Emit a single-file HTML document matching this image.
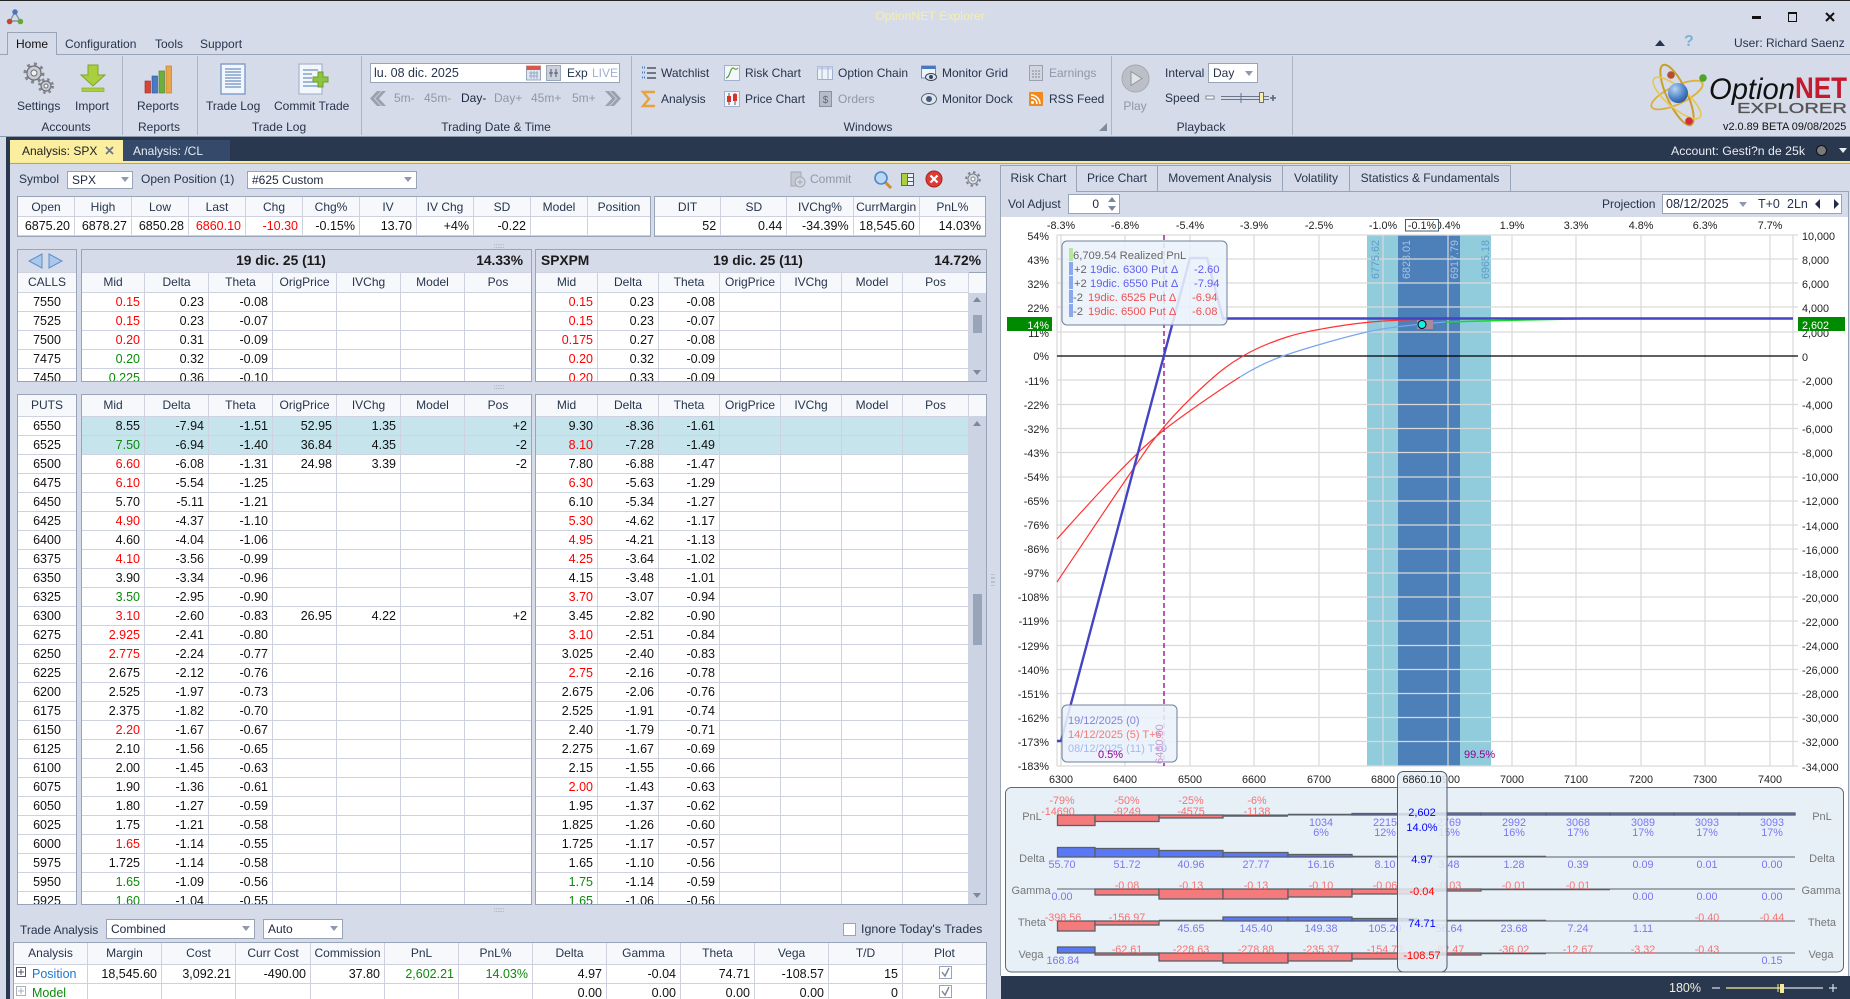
<!DOCTYPE html>
<html><head><meta charset="utf-8"><title>OptionNET Explorer</title>
<style>
html,body{margin:0;padding:0;width:1850px;height:999px;overflow:hidden;background:#d5dbe8}
body{position:relative;font:12px "Liberation Sans",Arial,sans-serif;color:#26344c}
.t{position:absolute;white-space:nowrap;line-height:14px}
.b{position:absolute;box-sizing:border-box}
.g{color:#8f98a8}
.c{text-align:center;transform:translateX(-50%)}
.sel{position:absolute;box-sizing:border-box;background:#fff;border:1px solid #98a5b9;line-height:16px;padding-left:4px;color:#1a2740;white-space:nowrap}
.ar{position:absolute;width:0;height:0;border-left:4px solid transparent;border-right:4px solid transparent;border-top:5px solid #8d99ac}
svg{position:absolute;overflow:visible}
table{border-collapse:collapse;table-layout:fixed;font-size:12.5px;color:#111}
td,th{box-sizing:border-box;border:1px solid #cdd1e0;padding:0 4px 0 0;text-align:right;overflow:hidden;white-space:nowrap;height:19px;line-height:14px;font-weight:normal}
th{background:#f6f8fc;text-align:center;padding:0 0 2px;color:#26344c;height:20px;font-size:12px}
.q th{padding:0}
td.k{text-align:center;padding:0}
.p{position:absolute;box-sizing:border-box;border:1px solid #98a5b9;overflow:hidden;background:#fff}
.p table{position:absolute;left:-1px}
.band{position:absolute;left:0;right:0;top:0;height:23px;background:#d5dbe8;border-bottom:1px solid #98a5b9;box-sizing:border-box}
.bd{font-weight:bold;color:#1a1a1a;font-size:13.8px}
.r{color:#f00}.n{color:#0a8a0a}
.h td{background:#c6e4ec}
.tab{position:absolute;box-sizing:border-box;top:165px;height:26px;border:1px solid #98a5b9;border-bottom:0;line-height:24px;text-align:center;background:#d5dbe8;color:#26344c}
.cx{font:10.8px "Liberation Sans",Arial,sans-serif}
</style></head><body>

<div class="b" style="left:0;top:0;width:1850px;height:1px;background:#222"></div>

<!-- app icon -->
<svg style="left:6px;top:8px" width="18" height="18" viewBox="0 0 18 18"><path d="M9 4L4 13H14Z" fill="none" stroke="#8a93a5" stroke-width="1.4"/><circle cx="9" cy="4" r="2.7" fill="#4a74b8"/><circle cx="3.6" cy="13.5" r="2.8" fill="#c8452c"/><circle cx="14.4" cy="13.5" r="2.8" fill="#64a83a"/></svg>
<div class="t c" style="left:930px;top:9px;color:#f6efae;font-size:12.3px">OptionNET Explorer</div>

<!-- window controls -->
<div class="b" style="left:1752px;top:16px;width:9px;height:3px;background:#111"></div>
<div class="b" style="left:1788px;top:12px;width:9px;height:10px;border:1.5px solid #111;border-top-width:2.5px"></div>
<svg style="left:1825px;top:12px" width="10" height="10"><path d="M1 1L9 9M9 1L1 9" stroke="#111" stroke-width="2"/></svg>

<!-- ribbon tabs -->
<div class="b" style="left:0;top:54px;width:1850px;height:1px;background:#98a5b9"></div>
<div class="b" style="left:7px;top:32px;width:50px;height:23px;background:#d5dbe8;border:1px solid #98a5b9;border-bottom:0"></div>
<div class="t" style="left:16px;top:37px;color:#111">Home</div>
<div class="t" style="left:65px;top:37px">Configuration</div>
<div class="t" style="left:155px;top:37px">Tools</div>
<div class="t" style="left:200px;top:37px">Support</div>
<svg style="left:1655px;top:40px" width="10" height="6"><path d="M0 6L5 0L10 6Z" fill="#26344c"/></svg>
<div class="t" style="left:1684px;top:35px;color:#7fb2d4;font-size:16px;font-weight:bold">?</div>
<div class="t" style="left:1734px;top:36px">User: Richard Saenz</div>

<!-- separators -->
<div class="b" style="left:122px;top:56px;width:1px;height:79px;background:#aab4c5"></div>
<div class="b" style="left:197px;top:56px;width:1px;height:79px;background:#aab4c5"></div>
<div class="b" style="left:361px;top:56px;width:1px;height:79px;background:#aab4c5"></div>
<div class="b" style="left:631px;top:56px;width:1px;height:79px;background:#aab4c5"></div>
<div class="b" style="left:1111px;top:56px;width:1px;height:79px;background:#aab4c5"></div>
<div class="b" style="left:1292px;top:56px;width:1px;height:79px;background:#aab4c5"></div>

<!-- ribbon large icons -->
<svg style="left:22px;top:62px" width="34" height="34" viewBox="0 0 34 34">
<circle cx="12" cy="11" r="7" fill="#c9ccd2" stroke="#6c7078" stroke-width="1.2"/><circle cx="12" cy="11" r="9" fill="none" stroke="#80858e" stroke-width="3" stroke-dasharray="3 4"/><circle cx="12" cy="11" r="3" fill="#eef0f3" stroke="#6c7078"/>
<circle cx="24" cy="24" r="5" fill="#c9ccd2" stroke="#6c7078" stroke-width="1.2"/><circle cx="24" cy="24" r="6.8" fill="none" stroke="#80858e" stroke-width="2.4" stroke-dasharray="2.5 3"/><circle cx="24" cy="24" r="2" fill="#eef0f3" stroke="#6c7078"/></svg>
<svg style="left:80px;top:64px" width="26" height="30" viewBox="0 0 26 30"><path d="M8 1H18V11H25L13 22L1 11H8Z" fill="#a9cf3f" stroke="#7da52a"/><rect x="2" y="24" width="22" height="3.5" fill="#a9cf3f" stroke="#7da52a" stroke-width=".6"/></svg>
<svg style="left:143px;top:64px" width="30" height="30" viewBox="0 0 30 30"><rect x="2" y="17" width="5.5" height="12" fill="#d8443a" stroke="#9b2a24" stroke-width=".6"/><rect x="9" y="12" width="5.5" height="17" fill="#4a7ac4" stroke="#2f568f" stroke-width=".6"/><rect x="16" y="7" width="5.5" height="22" fill="#6fae3d" stroke="#4a7d26" stroke-width=".6"/><rect x="23" y="2" width="5.5" height="27" fill="#eaa54a" stroke="#b47a2c" stroke-width=".6"/></svg>
<svg style="left:220px;top:63px" width="26" height="32" viewBox="0 0 26 32"><rect x="1" y="1" width="24" height="30" fill="#f3f6fc" stroke="#7d9cc8" stroke-width="1.4"/><path d="M5 6H21M5 9H21M5 12H21M5 15H21M5 18H21M5 21H21M5 24H21" stroke="#6f8fc0" stroke-width="1.2"/></svg>
<svg style="left:298px;top:63px" width="32" height="32" viewBox="0 0 32 32"><rect x="1" y="1" width="23" height="30" fill="#f3f6fc" stroke="#a9b6cc" stroke-width="1.2"/><path d="M5 7H20M5 11H14M5 15H14M5 19H20M5 23H20" stroke="#6f8fc0" stroke-width="1.3"/><path d="M19 6H24V11H29V16H24V21H19V16H14V11H19Z" transform="translate(1 3)" fill="#8cc63f" stroke="#6c9c2c"/></svg>

<div class="t" style="left:17px;top:99px">Settings</div>
<div class="t" style="left:75px;top:99px">Import</div>
<div class="t" style="left:137px;top:99px">Reports</div>
<div class="t" style="left:206px;top:99px">Trade Log</div>
<div class="t" style="left:274px;top:99px">Commit Trade</div>
<div class="t c" style="left:66px;top:120px">Accounts</div>
<div class="t c" style="left:159px;top:120px">Reports</div>
<div class="t c" style="left:279px;top:120px">Trade Log</div>
<div class="t c" style="left:496px;top:120px">Trading Date &amp; Time</div>
<div class="t c" style="left:868px;top:120px">Windows</div>
<div class="t c" style="left:1201px;top:120px">Playback</div>
<svg style="left:1099px;top:123px" width="8" height="8"><path d="M8 0V8H0Z" fill="#7d8ba0"/></svg>

<!-- date -->
<div class="sel" style="left:370px;top:63px;width:250px;height:20px;color:#26344c;padding-left:3px;line-height:18px;font-size:12.5px">lu. 08 dic. 2025</div>
<svg style="left:526px;top:65px" width="36" height="16" viewBox="0 0 36 16"><rect x="0.5" y="1" width="14" height="14" fill="#dfe6f4" stroke="#9aa6ba"/><rect x="0.5" y="1" width="14" height="4" fill="#d8574a"/><path d="M3 8H12M3 11H12M5 6V14M8 6V14M11 6V14" stroke="#8897b5" stroke-width=".7"/><rect x="20.5" y="0.5" width="14" height="15" fill="#ccd2dd" stroke="#9aa6ba"/><path d="M25 4V12M30 4V12M23 8H27M28 8H32" stroke="#556" stroke-width="1"/></svg>
<div class="t" style="left:567px;top:66px">Exp</div>
<div class="t" style="left:592px;top:66px;color:#9fb0cc">LIVE</div>
<svg style="left:368px;top:90px" width="18" height="17" viewBox="0 0 18 17"><path d="M9 1L2 8.500L9 16H13L6 8.500L13 1ZM14 1L7 8.500L14 16H18L11 8.500L18 1Z" fill="#9aa2ae"/></svg>
<svg style="left:605px;top:90px" width="18" height="17" viewBox="0 0 18 17"><path d="M9 1L16 8.500L9 16H5L12 8.500L5 1ZM4 1L11 8.500L4 16H0L7 8.500L0 1Z" fill="#9aa2ae"/></svg>
<div class="t g" style="left:394px;top:91px">5m-</div>
<div class="t g" style="left:424px;top:91px">45m-</div>
<div class="t" style="left:461px;top:91px;color:#1a2740">Day-</div>
<div class="t g" style="left:494px;top:91px">Day+</div>
<div class="t g" style="left:531px;top:91px">45m+</div>
<div class="t g" style="left:572px;top:91px">5m+</div>

<!-- windows icons -->
<svg style="left:641px;top:65px" width="16" height="16" viewBox="0 0 16 16"><path d="M1 2.500H4M1 7.500H4M1 12.500H4" stroke="#4a7ac4" stroke-width="2" stroke-dasharray="1 1"/><path d="M6 3H15M6 8H15M6 13H15" stroke="#333a48" stroke-width="1.3"/></svg>
<svg style="left:641px;top:91px" width="16" height="16" viewBox="0 0 16 16"><path d="M14 1H2L8 8L2 15H14" fill="none" stroke="#e9a33e" stroke-width="2.4"/></svg>
<svg style="left:724px;top:65px" width="16" height="16" viewBox="0 0 16 16"><rect x=".5" y=".5" width="15" height="15" fill="#f3f6fc" stroke="#9fb0cc"/><path d="M2 13C6 13 6 3 9 3C11 3 11 6 14 3" fill="none" stroke="#5f9f35" stroke-width="1.2"/></svg>
<svg style="left:724px;top:91px" width="16" height="16" viewBox="0 0 16 16"><rect x=".5" y=".5" width="15" height="15" fill="#f3f6fc" stroke="#9fb0cc"/><path d="M5 2V14M11 2V14" stroke="#555"/><rect x="3" y="5" width="4" height="6" fill="#d9322a"/><rect x="9" y="3" width="4" height="7" fill="#d9322a"/></svg>
<svg style="left:817px;top:65px" width="16" height="16" viewBox="0 0 16 16"><rect x=".5" y="1.500" width="15" height="13" fill="#edf2fb" stroke="#9fb0cc"/><rect x=".5" y="1.500" width="15" height="3" fill="#c5d3ee"/><path d="M5 2V14M11 2V14" stroke="#9fb0cc"/></svg>
<svg style="left:819px;top:91px" width="13" height="16" viewBox="0 0 13 16"><rect x=".5" y=".5" width="12" height="15" fill="#b7bdc8" stroke="#8a92a0"/><text x="6.500" y="12" font-size="10" text-anchor="middle" fill="#667">$</text></svg>
<svg style="left:921px;top:65px" width="16" height="17" viewBox="0 0 16 17"><rect x=".5" y="1" width="14" height="12" fill="#edf2fb" stroke="#6f8fc0"/><rect x=".5" y="1" width="14" height="3" fill="#4a78c0"/><ellipse cx="10" cy="12" rx="5.500" ry="3.500" fill="#dfe6f4" stroke="#345"/><circle cx="10" cy="12" r="2" fill="#345"/></svg>
<svg style="left:921px;top:92px" width="16" height="14" viewBox="0 0 16 14"><ellipse cx="8" cy="7" rx="7.500" ry="5.500" fill="#dfe6f4" stroke="#566"/><circle cx="8" cy="7" r="3" fill="#4a5a78"/></svg>
<svg style="left:1029px;top:65px" width="14" height="16" viewBox="0 0 14 16"><rect x=".5" y=".5" width="13" height="15" fill="#d0d5de" stroke="#9aa2ae"/><path d="M3 6H11M3 9H11M3 12H11" stroke="#9aa2ae" stroke-dasharray="2 1" stroke-width="1.400"/></svg>
<svg style="left:1029px;top:92px" width="14" height="14" viewBox="0 0 14 14"><rect width="14" height="14" rx="1" fill="#ef8a1f"/><circle cx="3.500" cy="10.500" r="1.500" fill="#fff"/><path d="M2 6A6 6 0 0 1 8 12M2 3A9 9 0 0 1 11 12" fill="none" stroke="#fff" stroke-width="1.500"/></svg>
<div class="t" style="left:661px;top:66px">Watchlist</div>
<div class="t" style="left:661px;top:92px">Analysis</div>
<div class="t" style="left:745px;top:66px">Risk Chart</div>
<div class="t" style="left:745px;top:92px">Price Chart</div>
<div class="t" style="left:838px;top:66px">Option Chain</div>
<div class="t g" style="left:838px;top:92px">Orders</div>
<div class="t" style="left:942px;top:66px">Monitor Grid</div>
<div class="t" style="left:942px;top:92px">Monitor Dock</div>
<div class="t g" style="left:1049px;top:66px">Earnings</div>
<div class="t" style="left:1049px;top:92px">RSS Feed</div>

<!-- playback -->
<svg style="left:1121px;top:64px" width="29" height="29" viewBox="0 0 29 29"><circle cx="14.500" cy="14.500" r="13.500" fill="#bcc0c6" stroke="#a4a9b1"/><path d="M10 7.500L21 14.500L10 21.500Z" fill="#dfe3ea" stroke="#8f959f"/></svg>
<div class="t g c" style="left:1135px;top:99px">Play</div>
<div class="t" style="left:1165px;top:66px">Interval</div>
<div class="sel" style="left:1208px;top:63px;width:50px;height:20px;line-height:18px;color:#26344c">Day</div>
<div class="ar" style="left:1245px;top:71px"></div>
<div class="t" style="left:1165px;top:91px">Speed</div>
<svg style="left:1206px;top:91px" width="70" height="14" viewBox="0 0 70 14"><rect x="0" y="5" width="8" height="3" fill="#fff" stroke="#6a7688" stroke-width=".8"/><path d="M15 5.500H63M15 8.500H63" stroke="#6a7688"/><path d="M35 2V12" stroke="#6a7688"/><rect x="53.500" y="1.500" width="4" height="10" fill="#fbeea8" stroke="#4a5568" stroke-width=".8"/><path d="M64 7H70M67 4V10" stroke="#5a6678" stroke-width="1.600"/></svg>

<!-- logo -->
<svg style="left:1640px;top:55px" width="210" height="80" viewBox="1640 55 210 80">
<ellipse cx="1677" cy="95" rx="28" ry="9" transform="rotate(-25 1677 95)" fill="none" stroke="#d9b13a" stroke-width="1.800"/>
<ellipse cx="1677" cy="95" rx="33" ry="10" transform="rotate(65 1677 95)" fill="none" stroke="#c99e2a" stroke-width="2"/>
<ellipse cx="1677" cy="98" rx="30" ry="10" transform="rotate(40 1677 98)" fill="none" stroke="#e8c655" stroke-width="1.600"/>
<defs><radialGradient id="sp" cx=".35" cy=".3" r=".8"><stop offset="0" stop-color="#b8d4f0"/><stop offset=".6" stop-color="#4d82c8"/><stop offset="1" stop-color="#24508e"/></radialGradient></defs>
<circle cx="1678" cy="93" r="10" fill="url(#sp)"/>
<circle cx="1671" cy="75" r="3.800" fill="#b5502c"/><circle cx="1703" cy="78" r="3.800" fill="#4fa42e"/><circle cx="1689" cy="121" r="3.800" fill="#d42c3c"/>
<text x="1709" y="99" font-family="Liberation Sans" font-style="italic" font-size="30" fill="#111" textLength="86" lengthAdjust="spacingAndGlyphs">Option</text>
<text x="1795" y="98" font-family="Liberation Sans" font-weight="bold" font-size="30" fill="#c41a2e" textLength="52" lengthAdjust="spacingAndGlyphs">NET</text>
<text x="1737" y="113" font-family="Liberation Sans" font-size="14.500" fill="#555" stroke="#555" stroke-width=".3" textLength="110" lengthAdjust="spacingAndGlyphs">EXPLORER</text>
</svg>
<div class="t" style="left:1723px;top:120px;font-size:10.9px;color:#111">v2.0.89 BETA 09/08/2025</div>

<!-- dark bar -->
<div class="b" style="left:0;top:136px;width:1850px;height:1px;background:#8d99ac"></div>
<div class="b" style="left:6px;top:137px;width:1844px;height:25px;background:#29374f"></div>
<div class="b" style="left:6px;top:137px;width:4px;height:862px;background:#29374f"></div>
<div class="b" style="left:10px;top:161px;width:1840px;height:2px;background:#f8ea96"></div>
<div class="b" style="left:10px;top:163px;width:1840px;height:1px;background:#98a5b9"></div>
<div class="b" style="left:10px;top:140px;width:113px;height:22px;background:#fbee9e"></div>
<div class="t" style="left:22px;top:144px;color:#222">Analysis: SPX</div>
<svg style="left:105px;top:146px" width="9" height="9"><path d="M1 1L8 8M8 1L1 8" stroke="#6d7686" stroke-width="1.800"/></svg>
<div class="b" style="left:123px;top:140px;width:107px;height:21px;background:#35496b"></div>
<div class="t" style="left:133px;top:144px;color:#e8edf5">Analysis: /CL</div>
<div class="t" style="left:1671px;top:144px;color:#e8edf5;font-size:12.3px">Account: Gesti?n de 25k</div>
<div class="b" style="left:1816px;top:145px;width:11px;height:11px;border-radius:50%;background:#7a7a7a;border:1px solid #111"></div>
<div class="ar" style="left:1839px;top:148px;border-top-color:#e8edf5"></div>

<!-- symbol row -->
<div class="t" style="left:19px;top:172px">Symbol</div>
<div class="sel" style="left:67px;top:171px;width:66px;height:18px">SPX</div><div class="ar" style="left:121px;top:177px"></div>
<div class="t" style="left:141px;top:172px">Open Position (1)</div>
<div class="sel" style="left:247px;top:171px;width:170px;height:18px">#625 Custom</div><div class="ar" style="left:404px;top:177px"></div>
<svg style="left:790px;top:171px" width="16" height="17" viewBox="0 0 16 17"><rect x="1" y="1" width="10" height="14" fill="#c3c8d1" stroke="#a4abb7"/><circle cx="10" cy="11" r="5" fill="#d3d7df" stroke="#a4abb7"/><path d="M7.500 11H12.500M10 8.500V13.500" stroke="#a4abb7"/></svg>
<div class="t g" style="left:810px;top:172px">Commit</div>
<svg style="left:873px;top:170px" width="20" height="20" viewBox="0 0 20 20"><path d="M12 12L18 18" stroke="#c9912e" stroke-width="3"/><circle cx="8" cy="8" r="6" fill="#b6d8f4" stroke="#4f86c4" stroke-width="1.600"/></svg>
<svg style="left:901px;top:173px" width="13" height="13" viewBox="0 0 13 13"><rect x="6.500" y=".5" width="6" height="12" fill="#eef2f9" stroke="#4a5a78"/><path d="M7 4.500H12M7 8.500H12" stroke="#4a5a78"/><rect x=".5" y=".5" width="6" height="12" fill="#a9cf3f" stroke="#5d7a24"/></svg>
<svg style="left:925px;top:170px" width="18" height="18" viewBox="0 0 18 18"><circle cx="9" cy="9" r="8" fill="#dd3b34" stroke="#a62420"/><path d="M5.500 5.500L12.500 12.500M12.500 5.500L5.500 12.500" stroke="#fff" stroke-width="2.200"/></svg>
<svg style="left:965px;top:171px" width="16" height="16" viewBox="0 0 16 16"><circle cx="8" cy="8" r="5" fill="#dde1e8" stroke="#7b818c"/><circle cx="8" cy="8" r="6.800" fill="none" stroke="#7b818c" stroke-width="2" stroke-dasharray="2.500 2.800"/><circle cx="8" cy="8" r="2" fill="#fff" stroke="#7b818c"/></svg>

<!-- quote tables -->
<div class="p q" style="left:17px;top:196px;width:634px;height:41px">
<table style="width:634px;top:-1px"><colgroup><col style="width:57px"><col style="width:57px"><col style="width:57px"><col style="width:57px"><col style="width:57px"><col style="width:57px"><col style="width:57px"><col style="width:57px"><col style="width:57px"><col style="width:57px"><col></colgroup><tr><th>Open<th>High<th>Low<th>Last<th>Chg<th>Chg%<th>IV<th>IV Chg<th>SD<th>Model<th>Position</tr>
<tr><td>6875.20<td>6878.27<td>6850.28<td class="r">6860.10<td class="r">-10.30<td>-0.15%<td>13.70<td>+4%<td>-0.22<td><td></tr></table></div>
<div class="p q" style="left:654px;top:196px;width:332px;height:41px">
<table style="width:332px;top:-1px"><tr><th>DIT<th>SD<th>IVChg%<th>CurrMargin<th>PnL%</tr>
<tr><td>52<td>0.44<td>-34.39%<td>18,545.60<td>14.03%</tr></table></div>
<div class="t" style="left:494px;top:240px;font-size:6px;color:#6d7686">::::::</div>

<!-- calls strike -->
<div class="p" style="left:17px;top:249px;width:60px;height:133px"><div class="band"></div>
<svg style="left:11px;top:4px" width="34" height="14" viewBox="0 0 34 14"><path d="M13 0V14L0 7Z" fill="#a9c8ec" stroke="#5f8fc8"/><path d="M20 0V14L33 7Z" fill="#a9c8ec" stroke="#5f8fc8"/></svg>
<table style="width:60px;top:22px"><tr><th>CALLS</tr>
<tr><td class="k">7550<tr><td class="k">7525<tr><td class="k">7500<tr><td class="k">7475<tr><td class="k">7450</table></div>

<div class="p" style="left:81px;top:249px;width:451px;height:133px"><div class="band"></div>
<div class="t bd c" style="left:199px;top:4px">19 dic. 25 (11)</div><div class="t bd" style="right:8px;top:4px">14.33%</div>
<table style="width:451px;top:22px"><colgroup><col style="width:63px"><col style="width:64px"><col style="width:64px"><col style="width:64px"><col style="width:64px"><col style="width:64px"><col></colgroup>
<tr><th>Mid<th>Delta<th>Theta<th>OrigPrice<th>IVChg<th>Model<th>Pos</tr>
<tr><td class="r">0.15<td>0.23<td>-0.08<td><td><td><td></tr>
<tr><td class="r">0.15<td>0.23<td>-0.07<td><td><td><td></tr>
<tr><td class="r">0.20<td>0.31<td>-0.09<td><td><td><td></tr>
<tr><td class="n">0.20<td>0.32<td>-0.09<td><td><td><td></tr>
<tr><td class="n">0.225<td>0.36<td>-0.10<td><td><td><td></tr></table></div>

<div class="p" style="left:535px;top:249px;width:452px;height:133px"><div class="band"></div>
<div class="t bd" style="left:5px;top:4px">SPXPM</div><div class="t bd c" style="left:222px;top:4px">19 dic. 25 (11)</div><div class="t bd" style="right:5px;top:4px">14.72%</div>
<table style="width:434px;top:22px"><colgroup><col style="width:62px"><col style="width:61px"><col style="width:61px"><col style="width:61px"><col style="width:61px"><col style="width:61px"><col></colgroup>
<tr><th>Mid<th>Delta<th>Theta<th>OrigPrice<th>IVChg<th>Model<th>Pos</tr>
<tr><td class="r">0.15<td>0.23<td>-0.08<td><td><td><td></tr>
<tr><td class="r">0.15<td>0.23<td>-0.07<td><td><td><td></tr>
<tr><td class="r">0.175<td>0.27<td>-0.08<td><td><td><td></tr>
<tr><td class="r">0.20<td>0.32<td>-0.09<td><td><td><td></tr>
<tr><td class="r">0.20<td>0.33<td>-0.09<td><td><td><td></tr></table>
<div class="b" style="left:433px;top:23px;width:18px;height:20px;background:#f6f8fc"></div>
<div class="b" style="left:433px;top:43px;width:18px;height:89px;background:#ccd3e3"></div>
<div class="ar" style="left:437px;top:47px;border-top:0;border-bottom:5px solid #7c889c"></div>
<div class="b" style="left:437px;top:65px;width:9px;height:18px;background:#98a5b9"></div>
<div class="ar" style="left:437px;top:120px;border-top-color:#7c889c"></div>
</div>
<div class="t" style="left:494px;top:381px;font-size:6px;color:#6d7686">::::::</div>

<!-- puts strike -->
<div class="p" style="left:17px;top:394px;width:60px;height:511px">
<table style="width:60px;top:-1px"><tr><th style="height:22px">PUTS</tr>
<tr><td class="k">6550<tr><td class="k">6525<tr><td class="k">6500<tr><td class="k">6475<tr><td class="k">6450<tr><td class="k">6425<tr><td class="k">6400<tr><td class="k">6375<tr><td class="k">6350<tr><td class="k">6325<tr><td class="k">6300<tr><td class="k">6275<tr><td class="k">6250<tr><td class="k">6225<tr><td class="k">6200<tr><td class="k">6175<tr><td class="k">6150<tr><td class="k">6125<tr><td class="k">6100<tr><td class="k">6075<tr><td class="k">6050<tr><td class="k">6025<tr><td class="k">6000<tr><td class="k">5975<tr><td class="k">5950<tr><td class="k">5925</table></div>

<div class="p" style="left:81px;top:394px;width:451px;height:511px">
<table style="width:451px;top:-1px"><colgroup><col style="width:63px"><col style="width:64px"><col style="width:64px"><col style="width:64px"><col style="width:64px"><col style="width:64px"><col></colgroup>
<tr><th style="height:22px">Mid<th>Delta<th>Theta<th>OrigPrice<th>IVChg<th>Model<th>Pos</tr>
<tr class="h"><td>8.55<td>-7.94<td>-1.51<td>52.95<td>1.35<td><td>+2</tr>
<tr class="h"><td class="n">7.50<td>-6.94<td>-1.40<td>36.84<td>4.35<td><td>-2</tr>
<tr><td class="r">6.60<td>-6.08<td>-1.31<td>24.98<td>3.39<td><td>-2</tr>
<tr><td class="r">6.10<td>-5.54<td>-1.25<td><td><td><td></tr>
<tr><td>5.70<td>-5.11<td>-1.21<td><td><td><td></tr>
<tr><td class="r">4.90<td>-4.37<td>-1.10<td><td><td><td></tr>
<tr><td>4.60<td>-4.04<td>-1.06<td><td><td><td></tr>
<tr><td class="r">4.10<td>-3.56<td>-0.99<td><td><td><td></tr>
<tr><td>3.90<td>-3.34<td>-0.96<td><td><td><td></tr>
<tr><td class="n">3.50<td>-2.95<td>-0.90<td><td><td><td></tr>
<tr><td class="r">3.10<td>-2.60<td>-0.83<td>26.95<td>4.22<td><td>+2</tr>
<tr><td class="r">2.925<td>-2.41<td>-0.80<td><td><td><td></tr>
<tr><td class="r">2.775<td>-2.24<td>-0.77<td><td><td><td></tr>
<tr><td>2.675<td>-2.12<td>-0.76<td><td><td><td></tr>
<tr><td>2.525<td>-1.97<td>-0.73<td><td><td><td></tr>
<tr><td>2.375<td>-1.82<td>-0.70<td><td><td><td></tr>
<tr><td class="r">2.20<td>-1.67<td>-0.67<td><td><td><td></tr>
<tr><td>2.10<td>-1.56<td>-0.65<td><td><td><td></tr>
<tr><td>2.00<td>-1.45<td>-0.63<td><td><td><td></tr>
<tr><td>1.90<td>-1.36<td>-0.61<td><td><td><td></tr>
<tr><td>1.80<td>-1.27<td>-0.59<td><td><td><td></tr>
<tr><td>1.75<td>-1.21<td>-0.58<td><td><td><td></tr>
<tr><td class="r">1.65<td>-1.14<td>-0.55<td><td><td><td></tr>
<tr><td>1.725<td>-1.14<td>-0.58<td><td><td><td></tr>
<tr><td class="n">1.65<td>-1.09<td>-0.56<td><td><td><td></tr>
<tr><td class="n">1.60<td>-1.04<td>-0.55<td><td><td><td></tr>
</table></div>

<div class="p" style="left:535px;top:394px;width:452px;height:511px">
<table style="width:434px;top:-1px"><colgroup><col style="width:62px"><col style="width:61px"><col style="width:61px"><col style="width:61px"><col style="width:61px"><col style="width:61px"><col></colgroup>
<tr><th style="height:22px">Mid<th>Delta<th>Theta<th>OrigPrice<th>IVChg<th>Model<th>Pos</tr>
<tr class="h"><td>9.30<td>-8.36<td>-1.61<td><td><td><td></tr>
<tr class="h"><td class="r">8.10<td>-7.28<td>-1.49<td><td><td><td></tr>
<tr><td>7.80<td>-6.88<td>-1.47<td><td><td><td></tr>
<tr><td class="r">6.30<td>-5.63<td>-1.29<td><td><td><td></tr>
<tr><td>6.10<td>-5.34<td>-1.27<td><td><td><td></tr>
<tr><td class="r">5.30<td>-4.62<td>-1.17<td><td><td><td></tr>
<tr><td class="r">4.95<td>-4.21<td>-1.13<td><td><td><td></tr>
<tr><td class="r">4.25<td>-3.64<td>-1.02<td><td><td><td></tr>
<tr><td>4.15<td>-3.48<td>-1.01<td><td><td><td></tr>
<tr><td class="r">3.70<td>-3.07<td>-0.94<td><td><td><td></tr>
<tr><td>3.45<td>-2.82<td>-0.90<td><td><td><td></tr>
<tr><td class="r">3.10<td>-2.51<td>-0.84<td><td><td><td></tr>
<tr><td>3.025<td>-2.40<td>-0.83<td><td><td><td></tr>
<tr><td class="r">2.75<td>-2.16<td>-0.78<td><td><td><td></tr>
<tr><td>2.675<td>-2.06<td>-0.76<td><td><td><td></tr>
<tr><td>2.525<td>-1.91<td>-0.74<td><td><td><td></tr>
<tr><td>2.40<td>-1.79<td>-0.71<td><td><td><td></tr>
<tr><td>2.275<td>-1.67<td>-0.69<td><td><td><td></tr>
<tr><td>2.15<td>-1.55<td>-0.66<td><td><td><td></tr>
<tr><td class="r">2.00<td>-1.43<td>-0.63<td><td><td><td></tr>
<tr><td>1.95<td>-1.37<td>-0.62<td><td><td><td></tr>
<tr><td>1.825<td>-1.26<td>-0.60<td><td><td><td></tr>
<tr><td>1.725<td>-1.17<td>-0.57<td><td><td><td></tr>
<tr><td>1.65<td>-1.10<td>-0.56<td><td><td><td></tr>
<tr><td class="n">1.75<td>-1.14<td>-0.59<td><td><td><td></tr>
<tr><td class="n">1.65<td>-1.06<td>-0.56<td><td><td><td></tr>
</table>
<div class="b" style="left:433px;top:0;width:18px;height:21px;background:#f6f8fc"></div>
<div class="b" style="left:433px;top:21px;width:18px;height:489px;background:#ccd3e3"></div>
<div class="ar" style="left:437px;top:26px;border-top:0;border-bottom:5px solid #7c889c"></div>
<div class="b" style="left:437px;top:199px;width:9px;height:51px;background:#98a5b9"></div>
<div class="ar" style="left:437px;top:498px;border-top-color:#7c889c"></div>
</div>
<div class="t" style="left:494px;top:904px;font-size:6px;color:#6d7686">::::::</div>

<!-- trade analysis -->
<div class="t" style="left:20px;top:923px">Trade Analysis</div>
<div class="sel" style="left:106px;top:919px;width:149px;height:20px;line-height:18px">Combined</div><div class="ar" style="left:242px;top:926px"></div>
<div class="sel" style="left:263px;top:919px;width:80px;height:20px;line-height:18px">Auto</div><div class="ar" style="left:330px;top:926px"></div>
<div class="b" style="left:843px;top:923px;width:13px;height:13px;background:#fff;border:1px solid #98a5b9"></div>
<div class="t" style="left:861px;top:922px;font-size:12.4px">Ignore Today's Trades</div>

<div class="p" style="left:13px;top:942px;width:974px;height:60px">
<table style="width:974px;top:-2px"><colgroup><col style="width:74px"><col style="width:74px"><col style="width:74px"><col style="width:75px"><col style="width:74px"><col style="width:74px"><col style="width:74px"><col style="width:74px"><col style="width:74px"><col style="width:74px"><col style="width:74px"><col style="width:74px"><col></colgroup>
<tr><th style="height:23px;padding-bottom:1px">Analysis<th style="padding-bottom:1px">Margin<th style="padding-bottom:1px">Cost<th style="padding-bottom:1px">Curr Cost<th style="padding-bottom:1px">Commission<th style="padding-bottom:1px">PnL<th style="padding-bottom:1px">PnL%<th style="padding-bottom:1px">Delta<th style="padding-bottom:1px">Gamma<th style="padding-bottom:1px">Theta<th style="padding-bottom:1px">Vega<th style="padding-bottom:1px">T/D<th style="padding-bottom:1px">Plot</tr>
<tr><td style="text-align:left;padding-left:18px;color:#1a78d0">Position<td>18,545.60<td>3,092.21<td>-490.00<td>37.80<td class="n">2,602.21<td class="n">14.03%<td>4.97<td>-0.04<td>74.71<td>-108.57<td>15<td></tr>
<tr><td style="text-align:left;padding-left:18px;color:#0a8a0a">Model<td><td><td><td><td><td><td>0.00<td>0.00<td>0.00<td>0.00<td>0<td></tr>
</table></div>
<svg style="left:16px;top:967px" width="12" height="30" viewBox="0 0 12 30"><rect x=".5" y=".5" width="9" height="9" fill="#fff" stroke="#556"/><path d="M2 5H8M5 2V8" stroke="#556"/><rect x=".5" y="19.500" width="9" height="9" fill="#fff" stroke="#a9b0bc"/><path d="M2 24H8M5 21V27" stroke="#a9b0bc"/></svg>
<svg style="left:939px;top:966px" width="14" height="34" viewBox="0 0 14 34"><rect x=".5" y=".5" width="12" height="12" fill="#fff" stroke="#98a5b9"/><path d="M3 6L6 10L10 2" fill="none" stroke="#7b8597" stroke-width="1.400"/><rect x=".5" y="19.500" width="12" height="12" fill="#fff" stroke="#98a5b9"/><path d="M3 25L6 29L10 21" fill="none" stroke="#7b8597" stroke-width="1.400"/></svg>

<div class="t" style="left:991px;top:575px;font-size:7px;color:#6d7686;line-height:4px">::<br>::<br>::</div>

<!-- right pane tabs -->
<div class="b" style="left:1000px;top:191px;width:849px;height:785px;border:1px solid #98a5b9;background:#d5dbe8"></div>
<div class="tab" style="left:1000px;width:77px;height:27px;z-index:2">Risk Chart</div>
<div class="tab" style="left:1076px;width:82px">Price Chart</div>
<div class="tab" style="left:1157px;width:126px">Movement Analysis</div>
<div class="tab" style="left:1282px;width:68px">Volatility</div>
<div class="tab" style="left:1349px;width:162px">Statistics &amp; Fundamentals</div>
<div class="t" style="left:1008px;top:197px">Vol Adjust</div>
<div class="sel" style="left:1068px;top:194px;width:52px;height:20px;line-height:18px;text-align:right;padding-right:20px">0</div>
<svg style="left:1107px;top:196px" width="10" height="16"><path d="M5 1L9 6H1Z M5 15L9 10H1Z" fill="#7c889c"/></svg>
<div class="t" style="left:1602px;top:197px">Projection</div>
<div class="sel" style="left:1662px;top:194px;width:180px;height:20px;line-height:18px;padding-left:3px;font-size:12.5px">08/12/2025</div>
<div class="ar" style="left:1739px;top:202px"></div>
<div class="t" style="left:1758px;top:197px;font-size:12.5px">T+0</div>
<div class="t" style="left:1787px;top:197px;font-size:12.5px">2Ln</div>
<svg style="left:1814px;top:199px" width="26" height="10"><path d="M6 0V10L1 5Z M20 0V10L25 5Z" fill="#1f2c44"/></svg>

<!-- chart -->
<div class="b" style="left:1001px;top:217px;width:847px;height:759px;background:#fff"></div>
<svg style="left:0;top:0" width="1850" height="999" viewBox="0 0 1850 999" class="cx">
<rect x="1367" y="235" width="124" height="531" fill="#90ccdb"/>
<rect x="1398" y="235" width="62" height="531" fill="#4d7fb9"/>
<path d="M1057 235V766M1061 235V766M1125 235V766M1190 235V766M1254 235V766M1319 235V766M1383 235V766M1448 235V766M1512 235V766M1576 235V766M1641 235V766M1705 235V766M1770 235V766M1793 235V766" stroke="#d9d9d9" stroke-width="1.200" fill="none"/>
<path d="M1057 235H1798M1057 259H1798M1057 283H1798M1057 307H1798M1057 332H1798M1057 380H1798M1057 404.500H1798M1057 428.500H1798M1057 452.500H1798M1057 477H1798M1057 501H1798M1057 525H1798M1057 549H1798M1057 573H1798M1057 597H1798M1057 621H1798M1057 645.500H1798M1057 669.500H1798M1057 693.500H1798M1057 717.500H1798M1057 741.500H1798M1057 766H1798" stroke="#d9d9d9" stroke-width="1.200" fill="none"/>
<g font-size="10.800" text-anchor="end">
<text transform="translate(1379 240) rotate(-90)" fill="#5f9ccc">6775.62</text>
<text transform="translate(1410 240) rotate(-90)" fill="#a4c4e4">6823.01</text>
<text transform="translate(1458 240) rotate(-90)" fill="#a4c4e4">6917.79</text>
<text transform="translate(1489 240) rotate(-90)" fill="#5f9ccc">6965.18</text>
</g>
<path d="M1057 356H1798" stroke="#000" stroke-width="1.300"/>
<path d="M1164 235V766" stroke="#960096" stroke-width="1.300" stroke-dasharray="5 3" fill="none"/>
<path d="M1057 539C1066.3 528.800 1095.2 496.200 1113 478C1130.800 459.800 1142.800 446.800 1164 430C1185.200 413.200 1226 385.700 1240 377" fill="none" stroke="#f33" stroke-width="1.200"/>
<path d="M1240 377C1254 368.300 1269 361 1283 356C1304 348.600 1343.800 337.300 1367 332C1390.200 326.700 1409 325.700 1422 324L1445 322" fill="none" stroke="#7aa6ee" stroke-width="1.300"/>
<path d="M1057 582C1068.700 564.700 1109.300 503.700 1127 478C1144.700 452.300 1149.700 443.800 1163 428C1176.300 412.200 1193.700 395 1207 383C1220.300 371 1229.700 363.700 1243 356C1256.300 348.300 1272 341.800 1287 337C1302 332.200 1317 329.700 1333 327C1349 324.300 1365.200 322.300 1383 321C1400 320 1420 319.300 1440 319L1500 318" fill="none" stroke="#f33" stroke-width="1.200"/>
<polyline points="1445,322 1500,320.500 1600,318.500" fill="none" stroke="#11dd22" stroke-width="1.500"/>
<polyline points="1057,741 1061,741 1190,258 1207,258 1223,318.500 1793,318.500" fill="none" stroke="#4444c4" stroke-width="2.400"/>
<rect x="1417" y="320" width="16" height="9" fill="#a58d9f"/>
<circle cx="1422" cy="324.500" r="4" fill="#10f0f0" stroke="#000" stroke-width="1"/>
<g fill="#222" text-anchor="middle">
<text x="1061" y="229">-8.3%</text><text x="1125" y="229">-6.8%</text><text x="1190" y="229">-5.4%</text><text x="1254" y="229">-3.9%</text><text x="1319" y="229">-2.5%</text><text x="1383" y="229">-1.0%</text><text x="1448" y="229">0.4%</text><text x="1512" y="229">1.9%</text><text x="1576" y="229">3.3%</text><text x="1641" y="229">4.8%</text><text x="1705" y="229">6.3%</text><text x="1770" y="229">7.7%</text>
<text x="1061" y="783">6300</text><text x="1125" y="783">6400</text><text x="1190" y="783">6500</text><text x="1254" y="783">6600</text><text x="1319" y="783">6700</text><text x="1383" y="783">6800</text><text x="1448" y="783">6900</text><text x="1512" y="783">7000</text><text x="1576" y="783">7100</text><text x="1641" y="783">7200</text><text x="1705" y="783">7300</text><text x="1770" y="783">7400</text>
</g>
<rect x="1405.500" y="219.500" width="33" height="11.500" fill="#fff" stroke="#4a5a6e"/>
<text x="1422" y="229" text-anchor="middle" fill="#222">-0.1%</text>
<g fill="#222" text-anchor="end">
<text x="1049" y="240">54%</text><text x="1049" y="264">43%</text><text x="1049" y="288">32%</text><text x="1049" y="312">22%</text><text x="1049" y="337">11%</text><text x="1049" y="360">0%</text><text x="1049" y="385">-11%</text><text x="1049" y="409">-22%</text><text x="1049" y="433">-32%</text><text x="1049" y="457">-43%</text><text x="1049" y="481">-54%</text><text x="1049" y="505">-65%</text><text x="1049" y="529">-76%</text><text x="1049" y="553">-86%</text><text x="1049" y="577">-97%</text><text x="1049" y="601">-108%</text><text x="1049" y="625">-119%</text><text x="1049" y="650">-129%</text><text x="1049" y="674">-140%</text><text x="1049" y="698">-151%</text><text x="1049" y="722">-162%</text><text x="1049" y="746">-173%</text><text x="1049" y="770">-183%</text>
</g>
<g fill="#222">
<text x="1802" y="240">10,000</text><text x="1802" y="264">8,000</text><text x="1802" y="288">6,000</text><text x="1802" y="312">4,000</text><text x="1802" y="337">2,000</text><text x="1802" y="361">0</text><text x="1802" y="385">-2,000</text><text x="1802" y="409">-4,000</text><text x="1802" y="433">-6,000</text><text x="1802" y="457">-8,000</text><text x="1802" y="481">-10,000</text><text x="1802" y="505">-12,000</text><text x="1802" y="530">-14,000</text><text x="1802" y="554">-16,000</text><text x="1802" y="578">-18,000</text><text x="1802" y="602">-20,000</text><text x="1802" y="626">-22,000</text><text x="1802" y="650">-24,000</text><text x="1802" y="674">-26,000</text><text x="1802" y="698">-28,000</text><text x="1802" y="722">-30,000</text><text x="1802" y="746">-32,000</text><text x="1802" y="771">-34,000</text>
</g>
<rect x="1007" y="317" width="45" height="14" fill="#008a00"/><text x="1049" y="329" fill="#fff" text-anchor="end">14%</text>
<rect x="1798" y="317" width="47" height="14" fill="#008a00"/><text x="1802" y="329" fill="#fff">2,602</text>

<!-- tooltip 1 -->
<rect x="1062" y="241" width="165" height="84" rx="5" fill="#ebf1fa" fill-opacity=".88" stroke="#6f8299"/>
<rect x="1069" y="248" width="4" height="13" fill="#b4e8a2"/>
<rect x="1069" y="262" width="4" height="13" fill="#8aa8ee"/><rect x="1069" y="276" width="4" height="13" fill="#8aa8ee"/><rect x="1069" y="290" width="4" height="13" fill="#8aa8ee"/><rect x="1069" y="304" width="4" height="13" fill="#8aa8ee"/>
<g font-size="11.200">
<text x="1073" y="259" fill="#666">6,709.54 Realized PnL</text>
<text x="1074" y="273" fill="#666">+2</text><text x="1090" y="273" fill="#6060f0">19dic. 6300 Put Δ</text><text x="1194" y="273" fill="#6060f0">-2.60</text>
<text x="1074" y="287" fill="#666">+2</text><text x="1090" y="287" fill="#6060f0">19dic. 6550 Put Δ</text><text x="1194" y="287" fill="#6060f0">-7.94</text>
<text x="1073" y="301" fill="#666">-2</text><text x="1088" y="301" fill="#f05050">19dic. 6525 Put Δ</text><text x="1192" y="301" fill="#f05050">-6.94</text>
<text x="1073" y="315" fill="#666">-2</text><text x="1088" y="315" fill="#f05050">19dic. 6500 Put Δ</text><text x="1192" y="315" fill="#f05050">-6.08</text>
</g>
<!-- tooltip 2 -->
<rect x="1062" y="705" width="115" height="57" rx="5" fill="#ebf1fa" fill-opacity=".88" stroke="#6f8299"/>
<g font-size="11">
<text x="1068" y="724" fill="#8484d8">19/12/2025 (0)</text>
<text x="1068" y="738" fill="#f57a7a">14/12/2025 (5) T+6</text>
<text x="1068" y="752" fill="#a2baf2">08/12/2025 (11) T+0</text>
<text x="1098" y="758" fill="#960096">0.5%</text>
<text x="1464" y="758" fill="#960096">99.5%</text>
<text transform="translate(1163 764) rotate(-90)" fill="#c79ad2">6460.60</text>
</g>

<!-- lower panel -->
<rect x="1005.500" y="787.500" width="838" height="184.500" rx="6" fill="#e7eff7" stroke="#596a7d"/>
<g fill="none" stroke="#5a5f66" stroke-width="1">
<path d="M1223 815H1795M1057 857H1795M1057 889H1795M1057 921H1795M1057 953H1795"/>
</g>
<g stroke="#5a5f66" stroke-width="1.300">
<g fill="#f47a7c">
<rect x="1057.500" y="815" width="37.500" height="10.500"/><rect x="1095" y="815" width="64" height="6.500"/><rect x="1159" y="815" width="64" height="3"/>
<rect x="1095" y="889" width="64" height="6"/><rect x="1159" y="889" width="64" height="10"/><rect x="1223" y="889" width="65" height="10"/><rect x="1288" y="889" width="64" height="8"/><rect x="1352" y="889" width="65" height="5"/><rect x="1417" y="889" width="64" height="2"/>
<rect x="1057.500" y="921" width="37.500" height="10"/><rect x="1095" y="921" width="64" height="4"/>
<rect x="1095" y="953" width="64" height="2"/><rect x="1159" y="953" width="64" height="8"/><rect x="1223" y="953" width="65" height="10"/><rect x="1288" y="953" width="64" height="8"/><rect x="1352" y="953" width="65" height="6"/><rect x="1417" y="953" width="64" height="2"/>
</g>
<g fill="#5878f8">
<rect x="1352" y="813.500" width="65" height="1.500"/><rect x="1417" y="813" width="64" height="2"/><rect x="1481" y="813" width="65" height="2"/><rect x="1546" y="813" width="64" height="2"/><rect x="1610" y="813" width="64" height="2"/><rect x="1674" y="813" width="65" height="2"/><rect x="1739" y="813" width="56" height="2"/>
<rect x="1057.500" y="847.500" width="37.500" height="9.500"/><rect x="1095" y="848.500" width="64" height="8.500"/><rect x="1159" y="850.500" width="64" height="6.500"/><rect x="1223" y="852.500" width="65" height="4.500"/><rect x="1288" y="854.500" width="64" height="2.500"/>
<rect x="1223" y="917" width="65" height="4"/><rect x="1288" y="917" width="64" height="4"/><rect x="1352" y="918.500" width="65" height="2.500"/>
<rect x="1057.500" y="947" width="37.500" height="6"/>
</g>
</g>
<path d="M1223 816H1288M1288 814.500H1352M1352 856.500H1546M1481 889.500H1610M1159 920.500H1223M1417 920.500H1546M1481 953.500H1546" stroke="#5a5f66" stroke-width="1.600" fill="none"/>
<g text-anchor="middle" fill="#f57474">
<text x="1062" y="804">-79%</text><text x="1127" y="804">-50%</text><text x="1191" y="804">-25%</text><text x="1257" y="804">-6%</text>
<text x="1058" y="815">-14690</text><text x="1127" y="815">-9249</text><text x="1191" y="815">-4575</text><text x="1257" y="815">-1138</text>
<text x="1127" y="889">-0.08</text><text x="1191" y="889">-0.13</text><text x="1256" y="889">-0.13</text><text x="1321" y="889">-0.10</text><text x="1385" y="889">-0.06</text><text x="1449" y="889">-0.03</text><text x="1514" y="889">-0.01</text><text x="1578" y="889">-0.01</text>
<text x="1063" y="921">-398.56</text><text x="1127" y="921">-156.97</text><text x="1707" y="921">-0.40</text><text x="1772" y="921">-0.44</text>
<text x="1127" y="953">-62.61</text><text x="1191" y="953">-228.63</text><text x="1256" y="953">-278.88</text><text x="1321" y="953">-235.37</text><text x="1385" y="953">-154.72</text><text x="1449" y="953">-82.47</text><text x="1514" y="953">-36.02</text><text x="1578" y="953">-12.67</text><text x="1643" y="953">-3.32</text><text x="1707" y="953">-0.43</text>
</g>
<g text-anchor="middle" fill="#7878f4">
<text x="1321" y="826">1034</text><text x="1385" y="826">2215</text><text x="1449" y="826">2769</text><text x="1514" y="826">2992</text><text x="1578" y="826">3068</text><text x="1643" y="826">3089</text><text x="1707" y="826">3093</text><text x="1772" y="826">3093</text>
<text x="1321" y="836">6%</text><text x="1385" y="836">12%</text><text x="1449" y="836">15%</text><text x="1514" y="836">16%</text><text x="1578" y="836">17%</text><text x="1643" y="836">17%</text><text x="1707" y="836">17%</text><text x="1772" y="836">17%</text>
<text x="1062" y="868">55.70</text><text x="1127" y="868">51.72</text><text x="1191" y="868">40.96</text><text x="1256" y="868">27.77</text><text x="1321" y="868">16.16</text><text x="1385" y="868">8.10</text><text x="1449" y="868">3.48</text><text x="1514" y="868">1.28</text><text x="1578" y="868">0.39</text><text x="1643" y="868">0.09</text><text x="1707" y="868">0.01</text><text x="1772" y="868">0.00</text>
<text x="1062" y="900">0.00</text><text x="1643" y="900">0.00</text><text x="1707" y="900">0.00</text><text x="1772" y="900">0.00</text>
<text x="1191" y="932">45.65</text><text x="1256" y="932">145.40</text><text x="1321" y="932">149.38</text><text x="1385" y="932">105.20</text><text x="1449" y="932">56.64</text><text x="1514" y="932">23.68</text><text x="1578" y="932">7.24</text><text x="1643" y="932">1.11</text>
<text x="1063" y="964">168.84</text><text x="1772" y="964">0.15</text>
</g>
<g text-anchor="middle" fill="#777" font-size="11">
<text x="1032" y="820">PnL</text><text x="1032" y="862">Delta</text><text x="1031" y="894">Gamma</text><text x="1032" y="926">Theta</text><text x="1031" y="958">Vega</text>
<text x="1822" y="820">PnL</text><text x="1822" y="862">Delta</text><text x="1821" y="894">Gamma</text><text x="1822" y="926">Theta</text><text x="1821" y="958">Vega</text>
</g>
<rect x="1397.500" y="771.500" width="49.500" height="200.500" rx="6" fill="#e4ecf5" fill-opacity=".85" stroke="#4a5a6e"/>
<text x="1422" y="783" text-anchor="middle" fill="#222">6860.10</text>
<g text-anchor="middle" font-size="11">
<text x="1422" y="816" fill="#0000ff">2,602</text><text x="1422" y="831" fill="#0000ff">14.0%</text><text x="1422" y="863" fill="#0000ff">4.97</text><text x="1422" y="895" fill="#f00">-0.04</text><text x="1422" y="927" fill="#0000ff">74.71</text><text x="1422" y="959" fill="#f00">-108.57</text>
</g>
</svg>

<!-- status bar -->
<div class="b" style="left:1001px;top:976px;width:849px;height:23px;background:#29374f"></div>
<div class="t" style="left:1669px;top:981px;color:#f3f0d8;font-size:12.5px">180%</div>
<svg style="left:1710px;top:980px" width="132" height="16" viewBox="0 0 132 16"><path d="M2 8H10" stroke="#d9dee8" stroke-width="1.200"/><path d="M16 8H70" stroke="#f8ea96" stroke-width="1.200"/><path d="M74 8H113" stroke="#d9dee8" stroke-width="1.200"/><path d="M68 4V12" stroke="#f8ea96"/><rect x="70" y="4" width="4" height="9" fill="#f8ea96"/><path d="M119 8H127M123 4V12" stroke="#d9dee8" stroke-width="1.200"/></svg>
</body></html>
